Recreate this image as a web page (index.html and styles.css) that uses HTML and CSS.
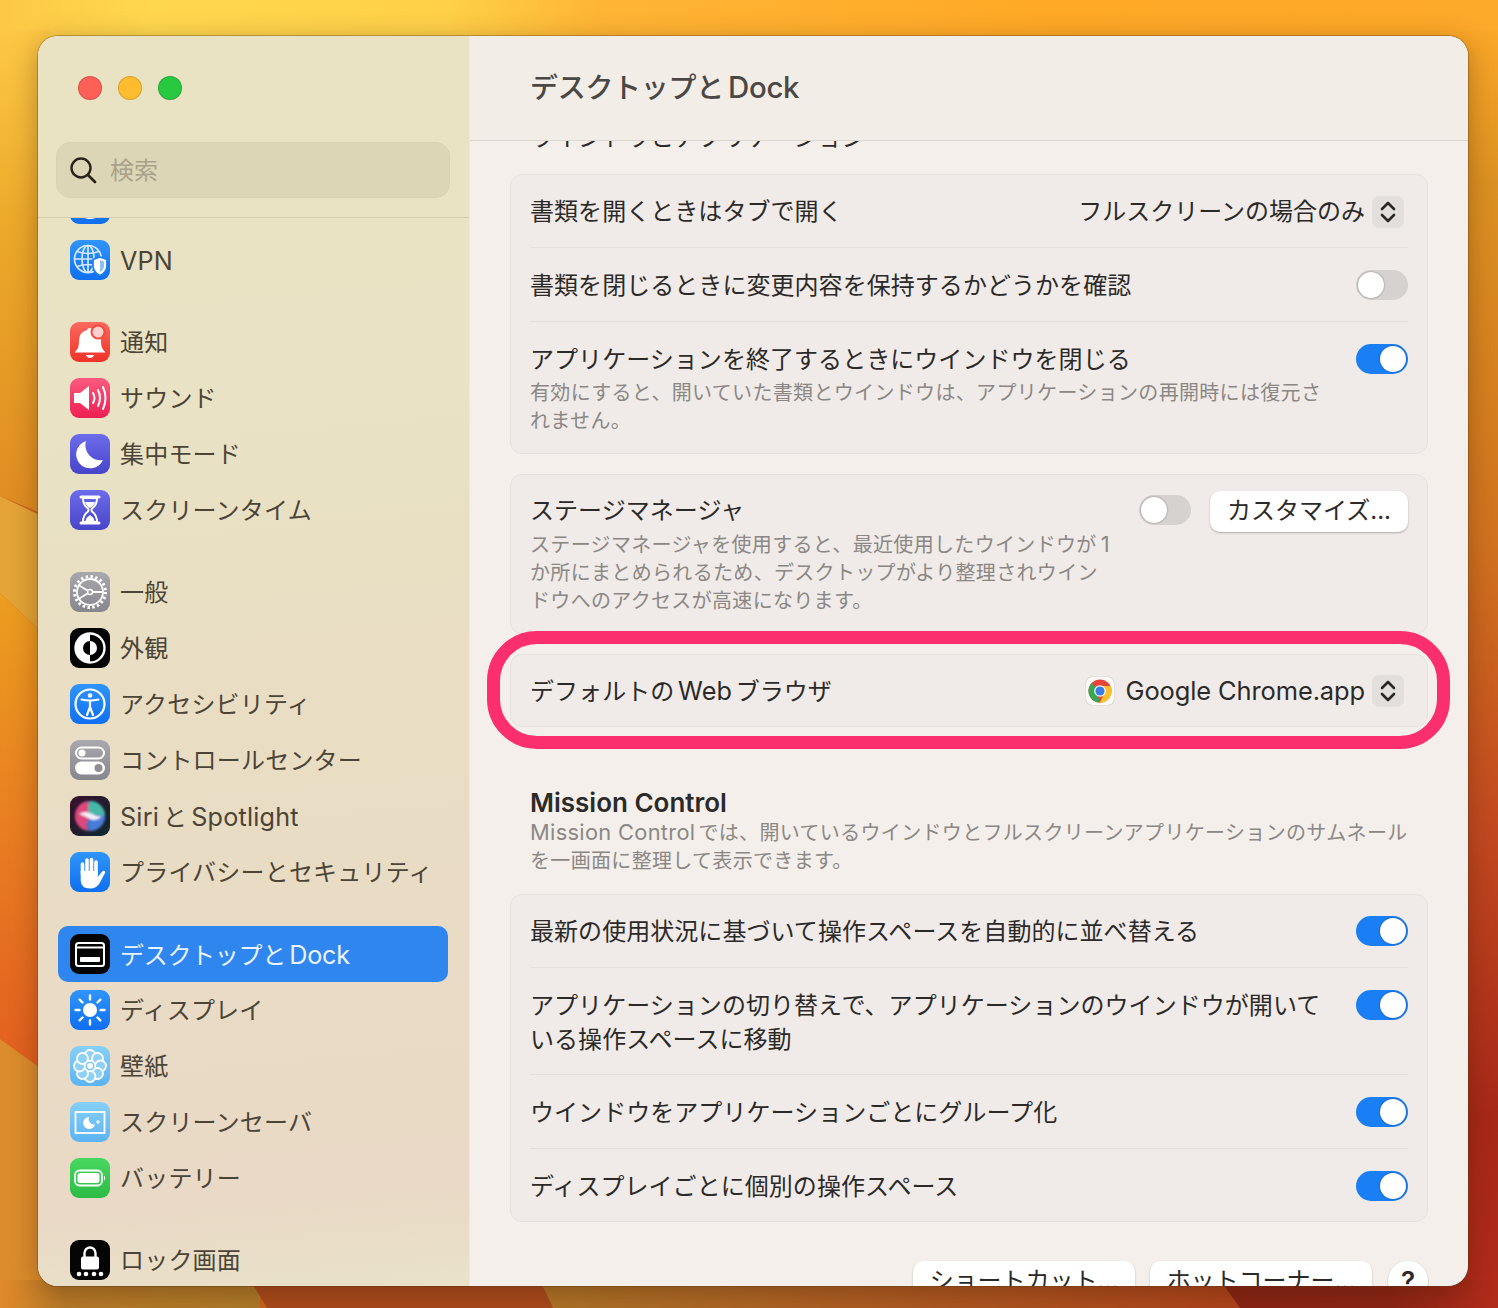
FILE: index.html
```html
<!DOCTYPE html>
<html lang="ja">
<head>
	<meta charset="utf-8">
	<title>デスクトップと Dock</title>
	<link rel="stylesheet" href="styles.css">
</head>
<body>
	<svg class="wallpaper" viewBox="0 0 1498 1308" aria-hidden="true">
		<defs>
			<linearGradient id="wp-top" x1="0" x2="1" y1="0" y2="0">
				<stop offset="0" stop-color="#fdc845"/><stop offset=".1" stop-color="#ffd84f"/><stop offset=".3" stop-color="#ffd048"/><stop offset=".4" stop-color="#ffb534"/><stop offset=".7" stop-color="#ffa926"/><stop offset="1" stop-color="#fda92a"/>
			</linearGradient>
			<linearGradient id="wp-right" x1="0" x2="0" y1="0" y2="1">
				<stop offset="0" stop-color="#fba828"/><stop offset=".12" stop-color="#dd9222"/><stop offset=".4" stop-color="#d2731f"/><stop offset=".62" stop-color="#c44a20"/><stop offset=".85" stop-color="#a92818"/><stop offset="1" stop-color="#b22a1a"/>
			</linearGradient>
			<linearGradient id="wp-left-a" x1="0" x2="0" y1="0" y2="1">
				<stop offset="0" stop-color="#fdc845"/><stop offset=".4" stop-color="#eca92a"/><stop offset="1" stop-color="#e08c22"/>
			</linearGradient>
			<linearGradient id="wp-left-b" x1="0" x2="0" y1="0" y2="1">
				<stop offset="0" stop-color="#ec9e20"/><stop offset=".55" stop-color="#e87a22"/><stop offset="1" stop-color="#e25e1f"/>
			</linearGradient>
			<linearGradient id="wp-bottom-a" x1="0" x2="1" y1="0" y2="0">
				<stop offset="0" stop-color="#e08a2a"/><stop offset=".25" stop-color="#b87a28"/><stop offset="1" stop-color="#ae7a28"/>
			</linearGradient>
			<linearGradient id="wp-bottom-b" x1="0" x2="1" y1="0" y2="0">
				<stop offset="0" stop-color="#ae7428"/><stop offset="1" stop-color="#ae431b"/>
			</linearGradient>
			<linearGradient id="wp-bottom-c" x1="0" x2="1" y1="0" y2="0">
				<stop offset="0" stop-color="#8a2415"/><stop offset=".6" stop-color="#8c2515"/><stop offset="1" stop-color="#b22b1a"/>
			</linearGradient>
		</defs>
		<rect x="0" y="0" width="1498" height="40" fill="url(#wp-top)"/>
		<rect x="1460" y="30" width="38" height="1278" fill="url(#wp-right)"/>
		<path d="M0 30H50V517L0 496Z" fill="url(#wp-left-a)"/>
		<path d="M0 496L50 520V640L0 593Z" fill="#e4a437"/>
		<path d="M0 593L50 640V1075L0 1039Z" fill="url(#wp-left-b)"/>
		<path d="M0 1039L50 1075V1308H0Z" fill="#dc8c2c"/>
		<rect x="0" y="1280" width="260" height="28" fill="url(#wp-bottom-a)"/>
		<path d="M250 1280H545L553 1308H267Z" fill="#ab4a1c"/>
		<path d="M540 1280H1222L1240 1308H553Z" fill="url(#wp-bottom-b)"/>
		<path d="M1220 1280H1498V1308H1240Z" fill="url(#wp-bottom-c)"/>
	</svg>
	<div class="window">
		<aside class="sidebar">
			<div class="sidebar-top">
				<div class="traffic">
					<span class="light light-red"></span>
					<span class="light light-yellow"></span>
					<span class="light light-green"></span>
				</div>
				<div class="search">
					<svg class="search-icon" viewBox="0 0 28 28"><circle cx="12" cy="12" r="9.500" fill="none" stroke="#2a2418" stroke-width="2.400"/><path d="M19 19l7 7" stroke="#2a2418" stroke-width="2.800" stroke-linecap="round"/></svg>
					<span class="search-text">検索</span>
				</div>
			</div>
			<nav class="nav-scroll">
				<div class="nav-list">
					<div class="nav-group">
						<a class="nav-item"><span class="tile tile-blue"><svg viewBox="0 0 40 40"><circle cx="20" cy="20" r="14" fill="none" stroke="#fff" stroke-width="2"/><ellipse cx="20" cy="20" rx="6" ry="14" fill="none" stroke="#fff" stroke-width="2"/></svg></span><span class="nav-label">ネットワーク</span></a>
						<a class="nav-item"><span class="tile tile-blue"><svg viewBox="0 0 40 40"><g fill="none" stroke="#d5e8ff" stroke-width="1.700"><circle cx="18" cy="19" r="13.500"/><ellipse cx="18" cy="19" rx="6" ry="13.500"/><path d="M18 5.500v27M4.500 19h27M7 11.500q11 4 22 0M7 26.500q11-4 22 0"/></g><path d="M30 17l7 2.500v7q-.5 6-7 9q-6.500-3-7-9v-7z" fill="#fff" stroke="#2080f0" stroke-width="1.800"/><path d="M30 20l4 1.500v5q-.5 3.500-4 5.500z" fill="#8fc0f8"/></svg></span><span class="nav-label"><span class="lat">VPN</span></span></a>
					</div>
					<div class="nav-group">
						<a class="nav-item"><span class="tile tile-red"><svg viewBox="0 0 40 40"><path d="M20 6q2.500 0 3 2q8 2 8 11q0 6 2 8.500l2.500 3h-31l2.500-3q2-2.500 2-8.500q0-9 8-11q.5-2 3-2z" fill="#fff"/><path d="M16 33h8q-1 3-4 3t-4-3z" fill="#fff"/><circle cx="28" cy="10" r="6.500" fill="#fbd0cc" stroke="#f8483e" stroke-width="2"/></svg></span><span class="nav-label">通知</span></a>
						<a class="nav-item"><span class="tile tile-pink"><svg viewBox="0 0 40 40"><path d="M4 15h6l9-7v24l-9-7h-6z" fill="#fff"/><g fill="none" stroke="#fff" stroke-width="2" stroke-linecap="round"><path d="M23 15q3 5 0 10"/><path d="M28 12q4 8 0 16"/><path d="M33 9q5 11 0 22"/></g></svg></span><span class="nav-label">サウンド</span></a>
						<a class="nav-item"><span class="tile tile-indigo"><svg viewBox="0 0 40 40"><path d="M16 7a14 14 0 1 0 17 19a15 15 0 0 1-17-19z" fill="#fff"/></svg></span><span class="nav-label">集中モード</span></a>
						<a class="nav-item"><span class="tile tile-indigo"><svg viewBox="0 0 40 40"><path d="M11 7h18M11 33h18" stroke="#fff" stroke-width="3" stroke-linecap="round"/><path d="M13 8q0 7 5 10.500q1 1.500 0 3q-5 3.500-5 10.500h14q0-7-5-10.500q-1-1.500 0-3q5-3.500 5-10.500z" fill="none" stroke="#fff" stroke-width="2"/><path d="M15 12h10q-1 4-5 6q-4-2-5-6zM15.500 31q1-4 4.500-6q3.500 2 4.500 6z" fill="#fff"/></svg></span><span class="nav-label">スクリーンタイム</span></a>
					</div>
					<div class="nav-group">
						<a class="nav-item"><span class="tile tile-gray"><svg viewBox="0 0 40 40"><circle cx="20" cy="20" r="15.500" fill="none" stroke="#fff" stroke-width="3" stroke-dasharray="2.400 2.470"/><circle cx="20" cy="20" r="13" fill="none" stroke="#fff" stroke-width="1.800"/><path d="M20 20L8.500 13M20 20L8.500 27M20 20h13" stroke="#fff" stroke-width="1.800"/><circle cx="20" cy="20" r="2.500" fill="#96969c" stroke="#fff" stroke-width="1.500"/></svg></span><span class="nav-label">一般</span></a>
						<a class="nav-item"><span class="tile tile-black"><svg viewBox="0 0 40 40"><circle cx="20" cy="20" r="14.500" fill="#000" stroke="#fff" stroke-width="2.400"/><path d="M20 5.500a14.500 14.500 0 0 0 0 29z" fill="#fff"/><path d="M20 13a7 7 0 0 0 0 14z" fill="#000"/><path d="M20 13a7 7 0 0 1 0 14z" fill="#fff"/></svg></span><span class="nav-label">外観</span></a>
						<a class="nav-item"><span class="tile tile-blue"><svg viewBox="0 0 40 40"><circle cx="20" cy="20" r="14.500" fill="none" stroke="#fff" stroke-width="2.200"/><circle cx="20" cy="11.500" r="2.300" fill="#fff"/><path d="M11.500 15.500q8.500 2 17 0M20 16.500v7M20 23l-3 8M20 23l3 8" fill="none" stroke="#fff" stroke-width="2.200" stroke-linecap="round"/></svg></span><span class="nav-label">アクセシビリティ</span></a>
						<a class="nav-item"><span class="tile tile-gray"><svg viewBox="0 0 40 40"><rect x="6" y="7.500" width="28" height="11" rx="5.500" fill="none" stroke="#fff" stroke-width="2"/><circle cx="12" cy="13" r="3.500" fill="#fff"/><rect x="5" y="21.500" width="30" height="13" rx="6.500" fill="#fff"/><circle cx="28.500" cy="28" r="4" fill="#8e8e94"/></svg></span><span class="nav-label">コントロールセンター</span></a>
						<a class="nav-item"><span class="tile tile-siri"><svg viewBox="0 0 40 40"><defs><filter id="siri-blur"><feGaussianBlur stdDeviation="1.300"/></filter></defs><g filter="url(#siri-blur)"><circle cx="20" cy="20" r="15" fill="#5a6a9a"/><path d="M5 20a15 15 0 0 1 12-14.700q8 7 3 14.700q-6 8-3 14.700a15 15 0 0 1-12-14.700z" fill="#e0467c"/><path d="M20 5a15 15 0 0 1 15 15q-8 3-15 0q-4-9 0-15z" fill="#46b8a8"/><path d="M35 20a15 15 0 0 1-15 15q-3-8 0-15q8-3 15 0z" fill="#4a7bd8"/><path d="M9 18q7-4 13 0q5 3 10 2q-6 6-12 3q-5-3-11-5z" fill="#f4eef6"/></g></svg></span><span class="nav-label"><span class="lat">Siri</span> と <span class="lat">Spotlight</span></span></a>
						<a class="nav-item"><span class="tile tile-blue"><svg viewBox="0 0 40 40"><path d="M12.500 22V12M17 20V8M21.500 20V7.500M26 22V10" fill="none" stroke="#fff" stroke-width="3.600" stroke-linecap="round"/><path d="M10.700 19h17v6l4.500-5.500c1.500-1.800 3.800-.5 2.800 1.500l-5 9.500q-3 6-10 6q-9 0-9.300-8z" fill="#fff"/></svg></span><span class="nav-label">プライバシーとセキュリティ</span></a>
					</div>
					<div class="nav-group">
						<a class="nav-item nav-item-active"><span class="tile tile-black"><svg viewBox="0 0 40 40"><rect x="6" y="9" width="28" height="23" rx="2.500" fill="none" stroke="#fff" stroke-width="2"/><path d="M7 13.500h26" stroke="#fff" stroke-width="2"/><rect x="10" y="23" width="20" height="5" rx="1" fill="#fff"/></svg></span><span class="nav-label">デスクトップと <span class="lat">Dock</span></span></a>
						<a class="nav-item"><span class="tile tile-blue"><svg viewBox="0 0 40 40"><circle cx="20" cy="20" r="7" fill="#fff"/><g stroke="#fff" stroke-width="2.400" stroke-linecap="round"><path d="M20 5.500v4M20 30.500v4M5.500 20h4M30.500 20h4M9.700 9.700l2.800 2.800M27.500 27.500l2.800 2.800M9.700 30.300l2.800-2.800M27.500 12.500l2.800-2.800"/></g></svg></span><span class="nav-label">ディスプレイ</span></a>
						<a class="nav-item"><span class="tile tile-sky"><svg viewBox="0 0 40 40"><g fill="#8fd0f5" stroke="#fff" stroke-width="1.800"><circle cx="20" cy="9.500" r="5.500"/><circle cx="27.500" cy="12.500" r="5.500"/><circle cx="30.500" cy="20" r="5.500"/><circle cx="27.500" cy="27.500" r="5.500"/><circle cx="20" cy="30.500" r="5.500"/><circle cx="12.500" cy="27.500" r="5.500"/><circle cx="9.500" cy="20" r="5.500"/><circle cx="12.500" cy="12.500" r="5.500"/></g><circle cx="20" cy="20" r="3" fill="#fff"/></svg></span><span class="nav-label">壁紙</span></a>
						<a class="nav-item"><span class="tile tile-sky"><svg viewBox="0 0 40 40"><rect x="5.500" y="10" width="29" height="21" fill="none" stroke="#fff" stroke-width="1.800"/><path d="M19 15a6 6 0 1 0 6 7.500a5.500 5.500 0 0 1-6-7.500z" fill="#fff"/><path d="M28 18v4M26 20h4" stroke="#fff" stroke-width="1.200"/></svg></span><span class="nav-label">スクリーンセーバ</span></a>
						<a class="nav-item"><span class="tile tile-green"><svg viewBox="0 0 40 40"><rect x="5" y="12.500" width="27" height="15" rx="4.500" fill="none" stroke="#fff" stroke-width="1.800"/><rect x="7.500" y="15" width="22" height="10" rx="2.500" fill="#fff"/><path d="M34 17.500q2.500 2.500 0 5z" fill="#fff"/></svg></span><span class="nav-label">バッテリー</span></a>
					</div>
					<div class="nav-group">
						<a class="nav-item"><span class="tile tile-black"><svg viewBox="0 0 40 40"><path d="M14.500 17v-4a5.500 5.500 0 0 1 11 0v4" fill="none" stroke="#fff" stroke-width="2.400"/><rect x="11" y="16.500" width="18" height="13" rx="2" fill="#fff"/><g fill="#fff"><circle cx="9" cy="34" r="2.300"/><circle cx="16" cy="34" r="2.300"/><circle cx="24" cy="34" r="2.300"/><circle cx="31" cy="34" r="2.300"/></g></svg></span><span class="nav-label">ロック画面</span></a>
					</div>
				</div>
			</nav>
		</aside>

		<main class="main">
			<header class="main-header">
				<h1>デスクトップと <span class="lat">Dock</span></h1>
			</header>
			<div class="main-scroll">
				<div class="main-content">
					<h2 class="clipped-title">ウインドウとアプリケーション</h2>

					<section class="card">
						<div class="row row-first">
							<div class="row-text">書類を開くときはタブで開く</div>
							<div class="select">フルスクリーンの場合のみ<span class="stepper"><svg viewBox="0 0 32 32"><path d="M10 13l6-6 6 6M10 19l6 6 6-6" fill="none" stroke="#2a2826" stroke-width="2.600" stroke-linecap="round" stroke-linejoin="round"/></svg></span></div>
						</div>
						<div class="row">
							<div class="row-text">書類を閉じるときに変更内容を保持するかどうかを確認</div>
							<span class="toggle"></span>
						</div>
						<div class="row">
							<div class="row-text">
								アプリケーションを終了するときにウインドウを閉じる
								<p class="note">有効にすると、開いていた書類とウインドウは、アプリケーションの再開時には復元さ<br>れません。</p>
							</div>
							<span class="toggle toggle-on"></span>
						</div>
					</section>

					<section class="card">
						<div class="row row-stage">
							<div class="row-text">
								ステージマネージャ
								<p class="note">ステージマネージャを使用すると、最近使用したウインドウが<span class="lat lat-one">1</span><br>か所にまとめられるため、デスクトップがより整理されウイン<br>ドウへのアクセスが高速になります。</p>
							</div>
							<div class="row-controls">
								<span class="toggle"></span>
								<span class="btn btn-customize">カスタマイズ...</span>
							</div>
						</div>
					</section>

					<div class="highlighted">
						<section class="card">
							<div class="row row-single">
								<div class="row-text">デフォルトの <span class="lat">Web</span> ブラウザ</div>
								<div class="select">
									<span class="app-tile"><svg viewBox="0 0 28 28"><circle cx="14" cy="14" r="11.500" fill="#e8453a"/><path d="M14 14L4 19.700A11.500 11.500 0 0 1 5.500 6.200z" fill="#34a853"/><path d="M14 25.500a11.500 11.500 0 0 1-10-5.800L9 12z" fill="#34a853"/><path d="M25.500 14a11.500 11.500 0 0 1-11.500 11.500l5-11.500z" fill="#fbc02d"/><path d="M14 9h10.400a11.500 11.500 0 0 1 1.100 5q0 6-5.500 9.800L18.500 11z" fill="#fbc02d"/><circle cx="14" cy="14" r="5.800" fill="#fff"/><circle cx="14" cy="14" r="4.600" fill="#3b7de8"/></svg></span>
									<span class="lat lat-app">Google Chrome.app</span><span class="stepper"><svg viewBox="0 0 32 32"><path d="M10 13l6-6 6 6M10 19l6 6 6-6" fill="none" stroke="#2a2826" stroke-width="2.600" stroke-linecap="round" stroke-linejoin="round"/></svg></span>
								</div>
							</div>
						</section>
						<div class="ring"></div>
					</div>

					<div class="section-head">
						<h2>Mission Control</h2>
						<p class="note"><span class="lat">Mission Control</span> では、開いているウインドウとフルスクリーンアプリケーションのサムネール<br>を一画面に整理して表示できます。</p>
					</div>

					<section class="card">
						<div class="row row-first">
							<div class="row-text">最新の使用状況に基づいて操作スペースを自動的に並べ替える</div>
							<span class="toggle toggle-on"></span>
						</div>
						<div class="row row-compact">
							<div class="row-text">アプリケーションの切り替えで、アプリケーションのウインドウが開いて<br>いる操作スペースに移動</div>
							<span class="toggle toggle-on"></span>
						</div>
						<div class="row">
							<div class="row-text">ウインドウをアプリケーションごとにグループ化</div>
							<span class="toggle toggle-on"></span>
						</div>
						<div class="row row-compact">
							<div class="row-text">ディスプレイごとに個別の操作スペース</div>
							<span class="toggle toggle-on"></span>
						</div>
					</section>

					<div class="footer-buttons">
						<span class="btn btn-wide">ショートカット...</span>
						<span class="btn btn-wide">ホットコーナー...</span>
						<span class="btn btn-help">?</span>
					</div>
				</div>
			</div>
		</main>
	</div>
</body>
</html>
```

FILE: styles.css
```css
html, body { margin: 0; height: 100%; }
body {
	position: relative;
	height: 1308px;
	overflow: hidden;
	padding: 36px 30px 22px 38px;
	box-sizing: border-box;
	font: 24px/34px Inter, "Noto Sans CJK JP", sans-serif;
	word-spacing: -3px;
	color: #2c2a28;
	background: #c9641f;
}
.wallpaper { position: absolute; left: 0; top: 0; width: 1498px; height: 1308px; }
.lat { font-size: 1.05em; word-spacing: 0; }
.lat-one { margin-left: 4px; }
.lat-app { font-size: 1.06em; letter-spacing: -.1px; }

.window {
	position: relative;
	display: flex;
	height: 1250px;
	border-radius: 20px;
	overflow: hidden;
	background: #f4efeb;
	box-shadow: 0 0 0 1px rgba(90, 60, 20, .35), 0 6px 28px rgba(50, 20, 0, .34);
}

/* sidebar */
.sidebar {
	width: 432px;
	flex: none;
	display: flex;
	flex-direction: column;
	box-sizing: border-box;
	border-right: 1px solid #f0e8df;
	background: linear-gradient(175deg, #e9e3c3 0, #e9e2c4 30%, #e9dcc4 65%, #e9d9c6 92%, #e9e2c8 100%);
}
.sidebar-top { flex: none; padding: 40px 18px 19px; border-bottom: 1px solid #d4cdb0; }
.traffic { display: flex; gap: 16px; padding-left: 22px; margin-bottom: 42px; }
.light { width: 24px; height: 24px; box-sizing: border-box; border-radius: 50%; border: 1px solid rgba(0, 0, 0, .14); }
.light-red { background: #fe5f57; }
.light-yellow { background: #febc2e; }
.light-green { background: #28c840; }
.search {
	display: flex;
	align-items: center;
	gap: 13px;
	height: 56px;
	width: 394px;
	box-sizing: border-box;
	padding-left: 12px;
	border-radius: 14px;
	border: 1px solid #d9d3b5;
	background: #dcd6b6;
	color: #a8a28a;
}
.search-icon { width: 28px; height: 28px; flex: none; }
.search-text { padding-top: 2px; }

.nav-scroll { flex: 1; overflow: hidden; }
.nav-list { margin-top: -42px; }
.nav-group { margin-bottom: 26px; letter-spacing: .2px; }
.nav-item {
	display: flex;
	align-items: center;
	gap: 10px;
	height: 56px;
	width: 390px;
	margin-left: 20px;
	box-sizing: border-box;
	padding-left: 12px;
	border-radius: 10px;
	color: #4c4436;
}
.nav-label { padding-top: 2px; }
.nav-item-active { background: #2f86ef; color: #eaf3ff; letter-spacing: -.3px; }
.tile { width: 40px; height: 40px; flex: none; border-radius: 9px; overflow: hidden; display: block; }
.tile svg { display: block; width: 40px; height: 40px; }
.tile-blue { background: linear-gradient(#2f95fb, #0f6ff0); }
.tile-red { background: linear-gradient(#fb6a5e, #f0312a); }
.tile-pink { background: linear-gradient(#fb5b80, #ee1f52); }
.tile-indigo { background: linear-gradient(#6c6ceb, #4745c9); }
.tile-gray { background: linear-gradient(#a8a8ad, #86868d); }
.tile-black { background: #050505; }
.tile-siri { background: linear-gradient(135deg, #3a0f2a, #0c2a33); }
.tile-sky { background: linear-gradient(#86d0f8, #5cb4f2); }
.tile-green { background: linear-gradient(#48d860, #2cbc46); }

/* main pane */
.main { flex: 1; min-width: 0; display: flex; flex-direction: column; }
.main-header {
	flex: none;
	height: 105px;
	box-sizing: border-box;
	padding-left: 60px;
	display: flex;
	align-items: center;
	background: #f3ede7;
	border-bottom: 1px solid #dcd6d0;
}
.main-header h1 { margin: -1px 0 0; font-size: 28px; line-height: 36px; font-weight: 500; letter-spacing: -.3px; color: #4b4744; }
.main-scroll { flex: 1; overflow: hidden; }
.main-content { margin-top: -20px; padding: 0 40px; }
.clipped-title { margin: 0 0 19px 20px; font-size: 24px; line-height: 34px; font-weight: 400; color: #2c2a28; }

.card { margin-bottom: 20px; padding: 0 19px; border: 1px solid #e6e1dd; border-radius: 12px; background: #f0ebe8; }
.row { display: flex; justify-content: space-between; align-items: flex-start; padding: 21px 0 18px; border-bottom: 1px solid #e4dfdb; }
.row:last-child { border-bottom: 0; }
.row-first { padding-top: 20px; }
.row-stage { padding-top: 19px; }
.row-single { padding: 19px 0 17px; }
.row-compact { padding-bottom: 17px; }
.row-text { min-width: 0; letter-spacing: .05px; }
.row-controls { display: flex; gap: 19px; align-items: flex-start; }
.note { margin: 2px 0 0; font-size: 20px; line-height: 28px; letter-spacing: .33px; color: #8b8784; }
.note .lat { font-size: 1.09em; }

.select { display: flex; align-items: center; height: 34px; }
.stepper { width: 32px; height: 32px; margin: 0 4px 0 7px; border-radius: 7px; background: #e3dfdc; display: block; }
.stepper svg { display: block; width: 32px; height: 32px; }
.app-tile { width: 28px; height: 28px; margin-right: 12px; border-radius: 6px; background: #fbfaf8; box-shadow: 0 0 1px rgba(0, 0, 0, .4); display: block; }
.app-tile svg { display: block; width: 28px; height: 28px; }

.toggle {
	position: relative;
	display: block;
	flex: none;
	width: 52px;
	height: 30px;
	margin-top: 1px;
	border-radius: 15px;
	background: #d6d2cf;
}
.toggle::after {
	content: "";
	position: absolute;
	left: 2px;
	top: 2px;
	width: 26px;
	height: 26px;
	border-radius: 50%;
	background: #fff;
	box-shadow: 0 0 2px rgba(0, 0, 0, .45);
}
.toggle-on { background: #1a7ff4; }
.toggle-on::after { left: 24px; }

.btn {
	display: block;
	box-sizing: border-box;
	height: 41px;
	line-height: 40px;
	text-align: center;
	border-radius: 10px;
	background: #fff;
	color: #2c2a28;
	box-shadow: 0 1px 2px rgba(0, 0, 0, .28);
}
.btn-customize { width: 198px; margin-top: -3px; }
.btn-wide { width: 222px; }
.btn-help { width: 40px; height: 40px; margin-left: 1px; border-radius: 50%; font-size: 26px; font-weight: 600; }

.highlighted { position: relative; }
.ring {
	position: absolute;
	left: -23px;
	right: -22px;
	top: -23px;
	bottom: -22px;
	border: 13px solid #fb2f6e;
	border-radius: 50px;
}

.section-head { margin: 60px 0 19px; padding-left: 20px; }
.section-head h2 { margin: 0; font-size: 26px; line-height: 31px; font-weight: 600; word-spacing: 0; color: #2c2a28; }
.section-head .note { margin: 0; }

.footer-buttons { display: flex; justify-content: flex-end; gap: 15px; margin-top: 39px; }
```
